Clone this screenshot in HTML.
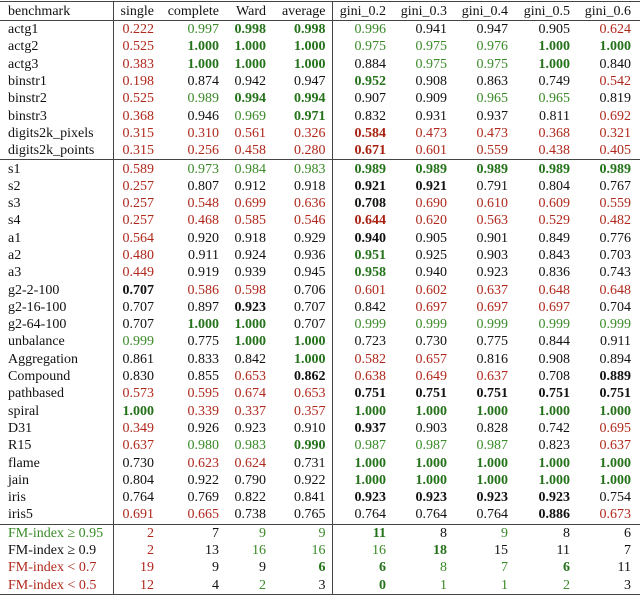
<!DOCTYPE html>
<html><head><meta charset="utf-8"><style>
body{margin:0;background:#fff;width:640px;height:595px;overflow:hidden}
table{position:absolute;left:0;top:1px;border-collapse:collapse;table-layout:fixed;width:640px;font-family:"Liberation Serif",serif;font-size:14px;color:#111}
td,th{padding:0 6px 0 0;text-align:right;white-space:nowrap;font-weight:normal;height:17.3px;line-height:17px}
td:first-child,th:first-child{text-align:left;padding-left:8px}
td:nth-child(2),th:nth-child(2),td:nth-child(6),th:nth-child(6){border-left:1px solid #444}
td:last-child,th:last-child{padding-right:9px}
thead tr{border-top:1.5px solid #444;border-bottom:1.5px solid #444}
thead th{height:18px}
tr.sep{border-top:1px solid #444}
tr.last{border-bottom:1.5px solid #444}
.r{color:#b0281c}.g{color:#3a8a28}.G{color:#24721a;font-weight:bold}.b{font-weight:bold}.R{color:#a82010;font-weight:bold}
</style></head><body>
<table>
<colgroup><col style="width:113px"><col style="width:47px"><col style="width:65px"><col style="width:47px"><col style="width:60px"><col style="width:60px"><col style="width:61px"><col style="width:61px"><col style="width:62px"><col style="width:64px"></colgroup>
<thead><tr><th>benchmark</th><th>single</th><th>complete</th><th>Ward</th><th>average</th><th>gini_0.2</th><th>gini_0.3</th><th>gini_0.4</th><th>gini_0.5</th><th>gini_0.6</th></tr></thead>
<tbody>
<tr><td>actg1</td><td class="r">0.222</td><td class="g">0.997</td><td class="G">0.998</td><td class="G">0.998</td><td class="g">0.996</td><td>0.941</td><td>0.947</td><td>0.905</td><td class="r">0.624</td></tr>
<tr><td>actg2</td><td class="r">0.525</td><td class="G">1.000</td><td class="G">1.000</td><td class="G">1.000</td><td class="g">0.975</td><td class="g">0.975</td><td class="g">0.976</td><td class="G">1.000</td><td class="G">1.000</td></tr>
<tr><td>actg3</td><td class="r">0.383</td><td class="G">1.000</td><td class="G">1.000</td><td class="G">1.000</td><td>0.884</td><td class="g">0.975</td><td class="g">0.975</td><td class="G">1.000</td><td>0.840</td></tr>
<tr><td>binstr1</td><td class="r">0.198</td><td>0.874</td><td>0.942</td><td>0.947</td><td class="G">0.952</td><td>0.908</td><td>0.863</td><td>0.749</td><td class="r">0.542</td></tr>
<tr><td>binstr2</td><td class="r">0.525</td><td class="g">0.989</td><td class="G">0.994</td><td class="G">0.994</td><td>0.907</td><td>0.909</td><td class="g">0.965</td><td class="g">0.965</td><td>0.819</td></tr>
<tr><td>binstr3</td><td class="r">0.368</td><td>0.946</td><td class="g">0.969</td><td class="G">0.971</td><td>0.832</td><td>0.931</td><td>0.937</td><td>0.811</td><td class="r">0.692</td></tr>
<tr><td>digits2k_pixels</td><td class="r">0.315</td><td class="r">0.310</td><td class="r">0.561</td><td class="r">0.326</td><td class="R">0.584</td><td class="r">0.473</td><td class="r">0.473</td><td class="r">0.368</td><td class="r">0.321</td></tr>
<tr><td>digits2k_points</td><td class="r">0.315</td><td class="r">0.256</td><td class="r">0.458</td><td class="r">0.280</td><td class="R">0.671</td><td class="r">0.601</td><td class="r">0.559</td><td class="r">0.438</td><td class="r">0.405</td></tr>
<tr class="sep"><td>s1</td><td class="r">0.589</td><td class="g">0.973</td><td class="g">0.984</td><td class="g">0.983</td><td class="G">0.989</td><td class="G">0.989</td><td class="G">0.989</td><td class="G">0.989</td><td class="G">0.989</td></tr>
<tr><td>s2</td><td class="r">0.257</td><td>0.807</td><td>0.912</td><td>0.918</td><td class="b">0.921</td><td class="b">0.921</td><td>0.791</td><td>0.804</td><td>0.767</td></tr>
<tr><td>s3</td><td class="r">0.257</td><td class="r">0.548</td><td class="r">0.699</td><td class="r">0.636</td><td class="b">0.708</td><td class="r">0.690</td><td class="r">0.610</td><td class="r">0.609</td><td class="r">0.559</td></tr>
<tr><td>s4</td><td class="r">0.257</td><td class="r">0.468</td><td class="r">0.585</td><td class="r">0.546</td><td class="R">0.644</td><td class="r">0.620</td><td class="r">0.563</td><td class="r">0.529</td><td class="r">0.482</td></tr>
<tr><td>a1</td><td class="r">0.564</td><td>0.920</td><td>0.918</td><td>0.929</td><td class="b">0.940</td><td>0.905</td><td>0.901</td><td>0.849</td><td>0.776</td></tr>
<tr><td>a2</td><td class="r">0.480</td><td>0.911</td><td>0.924</td><td>0.936</td><td class="G">0.951</td><td>0.925</td><td>0.903</td><td>0.843</td><td>0.703</td></tr>
<tr><td>a3</td><td class="r">0.449</td><td>0.919</td><td>0.939</td><td>0.945</td><td class="G">0.958</td><td>0.940</td><td>0.923</td><td>0.836</td><td>0.743</td></tr>
<tr><td>g2-2-100</td><td class="b">0.707</td><td class="r">0.586</td><td class="r">0.598</td><td>0.706</td><td class="r">0.601</td><td class="r">0.602</td><td class="r">0.637</td><td class="r">0.648</td><td class="r">0.648</td></tr>
<tr><td>g2-16-100</td><td>0.707</td><td>0.897</td><td class="b">0.923</td><td>0.707</td><td>0.842</td><td class="r">0.697</td><td class="r">0.697</td><td class="r">0.697</td><td>0.704</td></tr>
<tr><td>g2-64-100</td><td>0.707</td><td class="G">1.000</td><td class="G">1.000</td><td>0.707</td><td class="g">0.999</td><td class="g">0.999</td><td class="g">0.999</td><td class="g">0.999</td><td class="g">0.999</td></tr>
<tr><td>unbalance</td><td class="g">0.999</td><td>0.775</td><td class="G">1.000</td><td class="G">1.000</td><td>0.723</td><td>0.730</td><td>0.775</td><td>0.844</td><td>0.911</td></tr>
<tr><td>Aggregation</td><td>0.861</td><td>0.833</td><td>0.842</td><td class="G">1.000</td><td class="r">0.582</td><td class="r">0.657</td><td>0.816</td><td>0.908</td><td>0.894</td></tr>
<tr><td>Compound</td><td>0.830</td><td>0.855</td><td class="r">0.653</td><td class="b">0.862</td><td class="r">0.638</td><td class="r">0.649</td><td class="r">0.637</td><td>0.708</td><td class="b">0.889</td></tr>
<tr><td>pathbased</td><td class="r">0.573</td><td class="r">0.595</td><td class="r">0.674</td><td class="r">0.653</td><td class="b">0.751</td><td class="b">0.751</td><td class="b">0.751</td><td class="b">0.751</td><td class="b">0.751</td></tr>
<tr><td>spiral</td><td class="G">1.000</td><td class="r">0.339</td><td class="r">0.337</td><td class="r">0.357</td><td class="G">1.000</td><td class="G">1.000</td><td class="G">1.000</td><td class="G">1.000</td><td class="G">1.000</td></tr>
<tr><td>D31</td><td class="r">0.349</td><td>0.926</td><td>0.923</td><td>0.910</td><td class="b">0.937</td><td>0.903</td><td>0.828</td><td>0.742</td><td class="r">0.695</td></tr>
<tr><td>R15</td><td class="r">0.637</td><td class="g">0.980</td><td class="g">0.983</td><td class="G">0.990</td><td class="g">0.987</td><td class="g">0.987</td><td class="g">0.987</td><td>0.823</td><td class="r">0.637</td></tr>
<tr><td>flame</td><td>0.730</td><td class="r">0.623</td><td class="r">0.624</td><td>0.731</td><td class="G">1.000</td><td class="G">1.000</td><td class="G">1.000</td><td class="G">1.000</td><td class="G">1.000</td></tr>
<tr><td>jain</td><td>0.804</td><td>0.922</td><td>0.790</td><td>0.922</td><td class="G">1.000</td><td class="G">1.000</td><td class="G">1.000</td><td class="G">1.000</td><td class="G">1.000</td></tr>
<tr><td>iris</td><td>0.764</td><td>0.769</td><td>0.822</td><td>0.841</td><td class="b">0.923</td><td class="b">0.923</td><td class="b">0.923</td><td class="b">0.923</td><td>0.754</td></tr>
<tr><td>iris5</td><td class="r">0.691</td><td class="r">0.665</td><td>0.738</td><td>0.765</td><td>0.764</td><td>0.764</td><td>0.764</td><td class="b">0.886</td><td class="r">0.673</td></tr>
<tr class="sep"><td class="g">FM-index ≥ 0.95</td><td class="r">2</td><td>7</td><td class="g">9</td><td class="g">9</td><td class="G">11</td><td>8</td><td class="g">9</td><td>8</td><td>6</td></tr>
<tr><td>FM-index ≥ 0.9</td><td class="r">2</td><td>13</td><td class="g">16</td><td class="g">16</td><td class="g">16</td><td class="G">18</td><td>15</td><td>11</td><td>7</td></tr>
<tr><td class="r">FM-index &lt; 0.7</td><td class="r">19</td><td>9</td><td>9</td><td class="G">6</td><td class="G">6</td><td class="g">8</td><td class="g">7</td><td class="G">6</td><td>11</td></tr>
<tr class="last"><td class="r">FM-index &lt; 0.5</td><td class="r">12</td><td>4</td><td class="g">2</td><td>3</td><td class="G">0</td><td class="g">1</td><td class="g">1</td><td class="g">2</td><td>3</td></tr>
</tbody></table>
</body></html>
